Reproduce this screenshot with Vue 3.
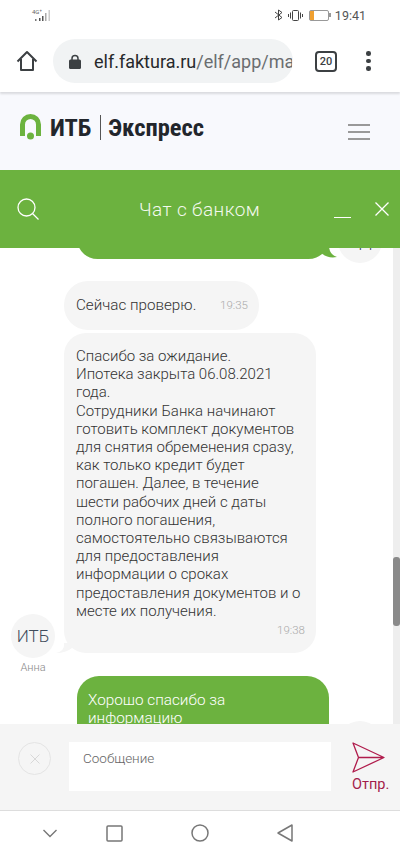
<script setup>
const lines = [
  "Спасибо за ожидание.",
  "Ипотека закрыта 06.08.2021 года.",
  "Сотрудники Банка начинают готовить комплект документов для снятия обременения сразу, как только кредит будет погашен. Далее, в течение шести рабочих дней с даты полного погашения, самостоятельно связываются для предоставления информации о сроках предоставления документов и о месте их получения.",
];
</script>

<template>
  <div class="page">
    <div class="status">
      <div class="net">
        <span class="net-text">4G⁺</span>
        <svg width="21" height="12" viewBox="0 0 21 12">
          <rect x="3" y="9" width="1.5" height="2" fill="#777" />
          <rect x="7" y="8" width="1.5" height="3" fill="#555" />
          <rect x="10" y="6" width="1.5" height="5" fill="#555" />
          <rect x="13" y="3" width="1.5" height="8" fill="#aaa" />
          <rect x="16.5" y="0" width="1.5" height="11" fill="#ccc" />
        </svg>
      </div>
      <div class="status-right">
        <svg width="9" height="12" viewBox="0 0 9 12" fill="none" stroke="#444" stroke-width="1">
          <path d="M1 3l7 5.500L4.500 11V1L8 3.500 1 9" />
        </svg>
        <svg width="15" height="11" viewBox="0 0 15 11" fill="none" stroke="#444" stroke-width="1">
          <rect x="4.500" y="0.500" width="6" height="10" rx="1" />
          <path d="M2.500 2.500v6M0.500 4v3M12.500 2.500v6M14.500 4v3" />
        </svg>
        <div class="battery"><span class="battery-level"></span></div>
        <span class="clock">19:41</span>
      </div>
    </div>

    <div class="browser">
      <svg class="home" width="22" height="22" viewBox="0 0 22 22" fill="none" stroke="#3c4043" stroke-width="2">
        <path d="M1.500 11.500 11 2l9.500 9.500M5 9v11h12V9" stroke-linejoin="round" />
      </svg>
      <div class="url">
        <svg width="12" height="15" viewBox="0 0 12 15">
          <path d="M3 6V4.500a3 3 0 0 1 6 0V6" fill="none" stroke="#3c4043" stroke-width="1.500" />
          <rect x="0" y="5.500" width="12" height="9.500" rx="1.500" fill="#3c4043" />
        </svg>
        <span class="url-text"><b>elf.faktura.ru</b>/elf/app/main</span>
      </div>
      <div class="tabs">20</div>
      <div class="dots"><i></i><i></i><i></i></div>
    </div>

    <header class="site">
      <div class="logo">
        <svg width="21" height="26" viewBox="0 0 21 26">
          <path d="M2.500 22V10.500a8 8 0 0 1 16 0V22" fill="none" stroke="#6cb33f" stroke-width="5" />
          <circle cx="10.500" cy="22" r="3.500" fill="#6cb33f" />
        </svg>
        <span class="logo-name">ИТБ</span>
        <span class="logo-sep"></span>
        <span class="logo-name">Экспресс</span>
      </div>
      <div class="burger"><i></i><i></i><i></i></div>
    </header>

    <div class="chat-head">
      <svg width="22" height="22" viewBox="0 0 22 22" fill="none" stroke="#fff" stroke-width="1.300">
        <circle cx="9.500" cy="9.500" r="8.500" />
        <path d="M15.500 15.500l6 6" />
      </svg>
      <div class="chat-title">Чат с банком</div>
      <span class="minimize"></span>
      <svg class="close" width="14" height="14" viewBox="0 0 14 14" stroke="#fff" stroke-width="1.300">
        <path d="M0.500 0.500l13 13M13.500 0.500l-13 13" />
      </svg>
    </div>

    <main class="chat">
      <div class="row row-out first">
        <div class="bubble out">
          <svg class="tail-out" width="20" height="12" viewBox="0 0 20 12">
            <path d="M0 0h12q1 8 8 10-10 2-17-5L0 6z" fill="#6cb23f" />
          </svg>
        </div>
        <div class="avatar">АД</div>
      </div>

      <div class="row row-in">
        <div class="bubble in short">
          <span>Сейчас проверю.</span>
          <span class="time">19:35</span>
        </div>
      </div>

      <div class="row long-row">
        <div class="who">
          <div class="avatar">ИТБ</div>
          <div class="name">Анна</div>
        </div>
        <div class="bubble in long">
          <svg class="tail-in" width="16" height="14" viewBox="0 0 16 14">
            <path d="M8 4q1 8-8 10 10 0 16-5V4z" fill="#f5f5f5" />
          </svg>
          <div v-for="(line, index) in lines" :key="index">{{ line }}</div>
          <div class="time time-end">19:38</div>
        </div>
      </div>

      <div class="row row-out last-row">
        <div class="bubble out last">Хорошо спасибо за информацию</div>
        <div class="avatar last-avatar"></div>
      </div>

      <div class="scroll"><div class="thumb"></div></div>
    </main>

    <div class="composer">
      <div class="attach">
        <svg width="10" height="10" viewBox="0 0 10 10" stroke="#d8d8d8" stroke-width="1">
          <path d="M0.500 0.500l9 9M9.500 0.500l-9 9" />
        </svg>
      </div>
      <div class="input">Сообщение</div>
      <div class="send">
        <svg width="33" height="31" viewBox="0 0 33 31" fill="none" stroke="#b01c4c" stroke-width="1.300" stroke-linejoin="round">
          <path d="M1 1l31 14.500L1 30l5.500-14.500zM6.500 15.500H32" />
        </svg>
        <span>Отпр.</span>
      </div>
    </div>

    <nav class="nav">
      <svg class="nav-down" width="14" height="9" viewBox="0 0 14 9" fill="none" stroke="#777" stroke-width="1.400">
        <path d="M0.500 1 7 7.500 13.500 1" />
      </svg>
      <svg class="nav-square" width="17" height="17" viewBox="0 0 17 17" fill="none" stroke="#777" stroke-width="1.500">
        <rect x="1" y="1" width="15" height="15" rx="1" />
      </svg>
      <svg class="nav-circle" width="18" height="18" viewBox="0 0 18 18" fill="none" stroke="#777" stroke-width="1.500">
        <circle cx="9" cy="9" r="8" />
      </svg>
      <svg class="nav-back" width="16" height="18" viewBox="0 0 16 18" fill="none" stroke="#777" stroke-width="1.500" stroke-linejoin="round">
        <path d="M15 1v16L1 9z" />
      </svg>
    </nav>
  </div>
</template>

<style scoped>
.page {
  width: 400px;
  height: 856px;
  display: flex;
  flex-direction: column;
  overflow: hidden;
  font-family: Roboto, "Noto Sans", sans-serif;
  background: #fff;
  color: #3a3a3a;
}
.status {
  height: 30px;
  flex: none;
  display: flex;
  justify-content: space-between;
  align-items: center;
  padding: 0 34px 0 32px;
}
.net {
  display: flex;
  align-items: flex-end;
  position: relative;
  width: 24px;
  height: 14px;
}
.net-text {
  font-size: 6px;
  color: #666;
  line-height: 8px;
  position: absolute;
  top: 0;
  left: 0;
}
.status-right {
  display: flex;
  align-items: center;
  gap: 5px;
}
.battery {
  width: 18px;
  height: 9px;
  border: 1px solid #999;
  border-radius: 2px;
  margin-left: 1px;
  position: relative;
}
.battery::after {
  content: "";
  position: absolute;
  right: -3px;
  top: 2px;
  width: 2px;
  height: 4px;
  background: #999;
}
.battery-level {
  display: block;
  width: 4px;
  height: 100%;
  background: #f0a030;
}
.clock {
  font-size: 12.500px;
  color: #555;
  margin-left: 1px;
}
.browser {
  height: 62px;
  flex: none;
  display: flex;
  align-items: center;
  padding: 0 0 0 16px;
  box-shadow: 0 2px 2px rgba(0, 0, 0, 0.12);
  position: relative;
  z-index: 1;
  background: #fff;
}
.url {
  width: 240px;
  height: 44px;
  margin-left: 15px;
  border-radius: 22px;
  background: #f1f3f4;
  display: flex;
  align-items: center;
  padding-left: 16px;
  box-sizing: border-box;
  overflow: hidden;
}
.url-text {
  margin-left: 13px;
  font-size: 18px;
  color: #6a6d70;
  white-space: nowrap;
  overflow: hidden;
  width: 198px;
  flex: none;
}
.url-text b {
  font-weight: 400;
  color: #26282b;
}
.tabs {
  width: 18px;
  height: 17px;
  margin-left: 22px;
  border: 2px solid #3c4043;
  border-radius: 4px;
  font-size: 11px;
  font-weight: 500;
  text-align: center;
  line-height: 17px;
  color: #3c4043;
}
.dots {
  margin-left: 29px;
  display: flex;
  flex-direction: column;
  gap: 3px;
}
.dots i {
  width: 4.500px;
  height: 4.500px;
  border-radius: 50%;
  background: #3c4043;
}
.site {
  height: 78px;
  flex: none;
  background: #f8f9fd;
  display: flex;
  justify-content: space-between;
  padding: 22px 30px 0 20px;
  box-sizing: border-box;
}
.logo {
  display: flex;
  align-items: center;
  height: 26px;
  gap: 9px;
}
.logo-name {
  font-family: "Roboto Condensed", Roboto, sans-serif;
  font-size: 24.500px;
  font-weight: 700;
  color: #22262c;
}
.logo-sep {
  width: 1px;
  height: 25px;
  background: #555;
  margin-right: -2px;
}
.burger {
  margin-top: 10px;
  display: flex;
  flex-direction: column;
  gap: 5px;
  width: 22px;
}
.burger i {
  height: 2px;
  background: #999;
}
.chat-head {
  height: 78px;
  flex: none;
  background: #6cb23f;
  display: flex;
  align-items: center;
  padding: 0 11px 0 17px;
  box-sizing: border-box;
  position: relative;
  z-index: 2;
  color: #fff;
}
.chat-title {
  flex: 1;
  text-align: center;
  font-size: 19px;
  font-weight: 300;
  letter-spacing: 0.4px;
  padding-left: 26px;
  color: #f3f9ee;
}
.minimize {
  width: 17px;
  height: 1px;
  background: #fff;
  margin: 16px 24px 0 0;
}
.chat {
  height: 476px;
  flex: none;
  position: relative;
  overflow: hidden;
  padding-left: 11px;
  display: flex;
  flex-direction: column;
}
.row {
  display: flex;
  align-items: flex-start;
  flex: none;
}
.row-out {
  padding-left: 66px;
  gap: 9px;
}
.row-in {
  padding-left: 53px;
}
.first {
  height: 30px;
  margin-top: -30px;
}
.first .bubble {
  height: 41px;
  padding: 0;
}
.first .avatar {
  margin-top: 1px;
  font-size: 17px;
}
.bubble {
  border-radius: 22px;
  font-size: 15px;
  font-weight: 300;
  line-height: 18.200px;
  box-sizing: border-box;
  position: relative;
  z-index: 1;
}
.out {
  width: 252px;
  background: #6cb23f;
  color: #fff;
  padding: 15px 11px;
  font-size: 15.300px;
}
.tail-out {
  position: absolute;
  left: 240px;
  bottom: 0;
}
.tail-in {
  position: absolute;
  left: -8px;
  bottom: 0;
}
.in {
  background: #f5f5f5;
  color: #333;
  padding: 14px 14px 13px 12px;
}
.short {
  margin-top: 33px;
  width: 195px;
  display: flex;
  justify-content: space-between;
  align-items: center;
  height: 49px;
  padding: 0 11px 0 12px;
  border-radius: 24px;
  font-size: 15.200px;
}
.long-row {
  margin-top: 3px;
  gap: 11px;
}
.who {
  width: 42px;
  display: flex;
  flex-direction: column;
  align-items: center;
  align-self: flex-end;
  margin: 0 -1px -21px 1px;
}
.name {
  font-size: 11px;
  font-weight: 300;
  color: #888;
  margin-top: 3px;
  line-height: 13px;
}
.long {
  width: 252px;
  height: 320px;
  padding-top: 14px;
}
.time {
  font-size: 11.500px;
  color: #aaa;
  font-weight: 300;
}
.time-end {
  text-align: right;
  margin-right: -3px;
  line-height: 20px;
}
.avatar {
  width: 44px;
  height: 44px;
  flex: none;
  border-radius: 50%;
  background: #f5f5f5;
  color: #3f4c5c;
  font-size: 17px;
  font-weight: 300;
  text-align: center;
  line-height: 44px;
}
.last-row {
  margin-top: 23px;
}
.last {
  height: 80px;
}
.last-avatar {
  margin-top: 45px;
}
.scroll {
  position: absolute;
  right: 0;
  top: 0;
  bottom: 0;
  width: 7px;
  background: #eeeeee;
  z-index: 2;
}
.thumb {
  position: absolute;
  top: 309px;
  height: 69px;
  left: 0;
  right: 0;
  background: #8a8a8a;
  border-radius: 3px;
}
.composer {
  height: 87px;
  flex: none;
  background: #f5f5f5;
  border-bottom: 1px solid #ddd;
  box-sizing: border-box;
  display: flex;
  align-items: flex-start;
  padding: 18px 11px 0 18px;
  position: relative;
  z-index: 2;
}
.attach {
  width: 31px;
  height: 31px;
  border: 1px solid #e4e4e4;
  border-radius: 50%;
  display: flex;
  align-items: center;
  justify-content: center;
  flex: none;
}
.input {
  width: 262px;
  height: 49px;
  margin-left: 18px;
  background: #fff;
  padding: 8px 0 0 14px;
  box-sizing: border-box;
  font-size: 13.500px;
  font-weight: 300;
  color: #666;
  flex: none;
}
.send {
  margin-left: 21px;
  display: flex;
  flex-direction: column;
  align-items: flex-start;
  color: #a31c4b;
  font-size: 14.500px;
  gap: 3px;
}
.nav {
  flex: none;
  height: 45px;
  display: flex;
  align-items: center;
  padding: 0 0 1px 43px;
  background: #fff;
  box-sizing: border-box;
}
.nav-square {
  margin-left: 49px;
}
.nav-circle {
  margin-left: 68px;
}
.nav-back {
  margin-left: 68px;
}
</style>

<style>
html,
body {
  margin: 0;
  background: #fff;
}
</style>
